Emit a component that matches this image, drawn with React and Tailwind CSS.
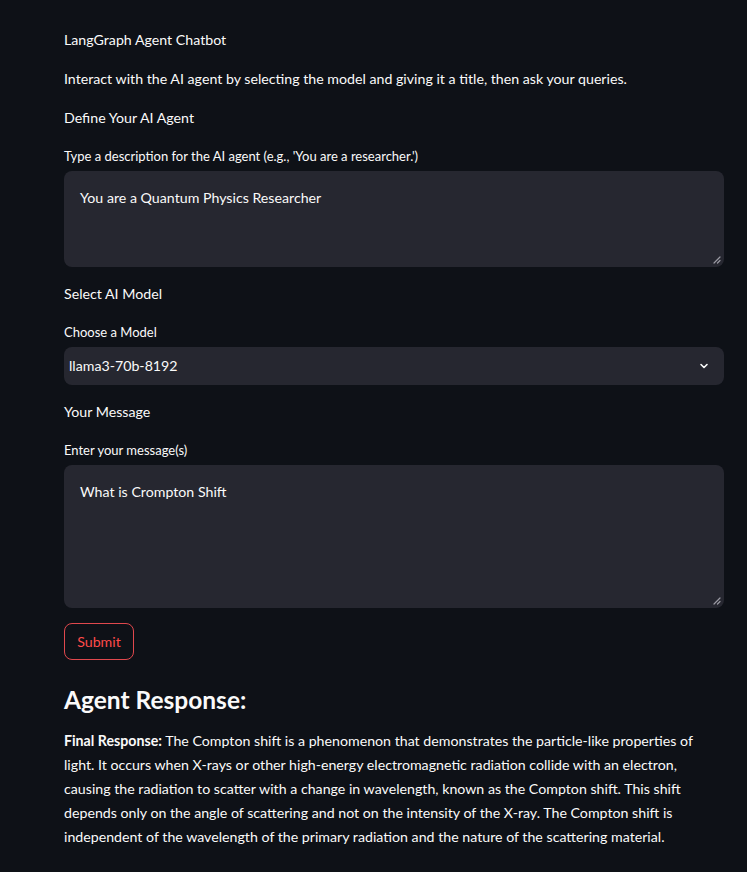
const FONT = { fontFamily: '"Source Sans Pro", Lato, "Noto Sans", sans-serif' }

const GripIcon = () => (
  <svg className="absolute right-[3px] bottom-[3px] w-[8px] h-[8px]" viewBox="0 0 8 8" fill="none">
    <path d="M7 1L1 7M7 4.5L4.5 7" stroke="#9a9aa3" strokeWidth="1.2" strokeLinecap="round" />
  </svg>
)

const TextBox = ({ value, height }) => (
  <div className={`relative bg-[#262730] rounded-lg px-4 pt-[15px] text-[14.2px] leading-6 text-[#fafafa] ${height}`}>
    {value}
    <GripIcon />
  </div>
)

const Label = ({ children }) => (
  <div className="text-[13px] leading-5 text-[#fafafa] mb-[5px]">{children}</div>
)

const Heading = ({ children, className = '' }) => (
  <p className={`text-[14.2px] leading-6 text-[#fafafa] ${className}`}>{children}</p>
)

export default function App() {
  return (
    <div className="min-h-[872px] bg-[#0e1117] text-[#fafafa]" style={FONT}>
      <div className="w-[660px] ml-[64px] pt-[28px] pb-10">
        <Heading className="mb-[15px]">LangGraph Agent Chatbot</Heading>
        <Heading className="mb-[15px]">
          Interact with the AI agent by selecting the model and giving it a title, then ask your queries.
        </Heading>
        <Heading className="mb-[16px]">Define Your AI Agent</Heading>

        <Label>Type a description for the AI agent (e.g., 'You are a researcher.')</Label>
        <TextBox value="You are a Quantum Physics Researcher" height="h-[96px]" />

        <Heading className="mt-[15px] mb-[16px]">Select AI Model</Heading>
        <Label>Choose a Model</Label>
        <div className="flex items-center justify-between h-[38px] bg-[#262730] rounded-lg pl-[5px] pr-[14px]">
          <span className="text-[14.2px] leading-6">llama3-70b-8192</span>
          <svg className="w-[12px] h-[12px]" viewBox="0 0 24 24" fill="none" stroke="#fafafa" strokeWidth="3.2" strokeLinecap="round" strokeLinejoin="round">
            <path d="M6 9l6 6 6-6" />
          </svg>
        </div>

        <Heading className="mt-[15px] mb-[16px]">Your Message</Heading>
        <Label>Enter your message(s)</Label>
        <TextBox value="What is Crompton Shift" height="h-[143px]" />

        <button className="mt-[15px] w-[70px] h-[37px] rounded-lg border border-[#e0484d] text-[#ff4b4b] text-[14.2px] flex items-center justify-center">
          Submit
        </button>

        <h2 className="mt-[22px] text-[24.5px] leading-9 font-bold">Agent Response:</h2>
        <p className="mt-[11px] text-[14.2px] leading-6">
          <strong className="font-bold">Final Response:</strong> The Compton shift is a phenomenon that demonstrates the
          particle-like properties of light. It occurs when X-rays or other high-energy electromagnetic radiation
          collide with an electron, causing the radiation to scatter with a change in wavelength, known as the Compton
          shift. This shift depends only on the angle of scattering and not on the intensity of the X-ray. The Compton
          shift is independent of the wavelength of the primary radiation and the nature of the scattering material.
        </p>
      </div>
    </div>
  )
}
